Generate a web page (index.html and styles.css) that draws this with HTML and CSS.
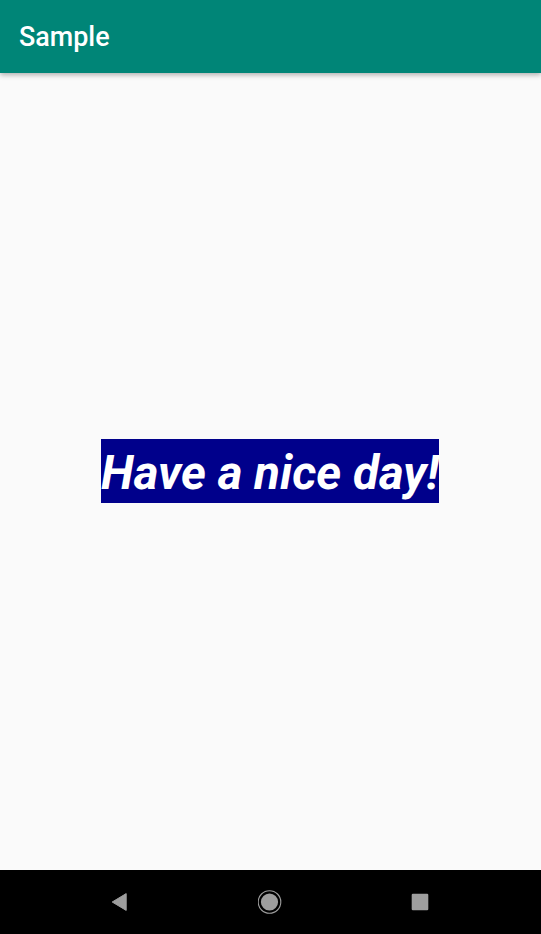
FILE: index.html
```html
<!DOCTYPE html>
<html lang="en">

<head>
  <meta charset="UTF-8">
  <meta name="viewport" content="width=device-width, initial-scale=1.0">
  <title>Sample</title>
  <link rel="stylesheet" href="styles.css">
</head>

<body>
  <header class="app-bar">Sample</header>
  <main class="content">
    <p class="greeting">Have a nice day!</p>
  </main>
  <nav class="nav-bar">
    <svg class="nav-icon" viewBox="0 0 24 24">
      <path d="M4.2 12 L18.2 3.6 V20.4 Z" fill="#9e9e9e" stroke="#9e9e9e" stroke-width="1" stroke-linejoin="round" />
    </svg>
    <svg class="nav-icon" viewBox="0 0 24 24">
      <circle cx="11.5" cy="12" r="11.3" fill="none" stroke="#9e9e9e" stroke-width="1.1" />
      <circle cx="11.5" cy="12" r="8.6" fill="#9e9e9e" />
    </svg>
    <svg class="nav-icon" viewBox="0 0 24 24">
      <rect x="3.7" y="3.7" width="16.6" height="16.6" rx="1.2" fill="#9e9e9e" />
    </svg>
  </nav>
</body>

</html>
```

FILE: styles.css
```css
body {
  margin: 0;
  height: 934px;
  display: flex;
  flex-direction: column;
  background: #fafafa;
  font-family: Roboto, "Liberation Sans", sans-serif;
  overflow: hidden;
}

.app-bar {
  height: 73px;
  flex: none;
  box-sizing: border-box;
  display: flex;
  align-items: center;
  padding-left: 19px;
  background: #008577;
  color: #fff;
  font-size: 26.9px;
  font-weight: 500;
  box-shadow: 0 2px 5px rgba(0, 0, 0, 0.3);
  position: relative;
}

.content {
  flex: 1;
  display: flex;
  align-items: center;
  justify-content: center;
  padding: 0 1px 1px 0;
}

.greeting {
  margin: 0;
  width: 338px;
  height: 64px;
  line-height: 68px;
  text-align: center;
  white-space: nowrap;
  background: #00008b;
  color: #fff;
  font-size: 47.6px;
  font-weight: 700;
  font-style: italic;
}

.nav-bar {
  height: 64px;
  flex: none;
  display: flex;
  align-items: center;
  justify-content: center;
  gap: 126px;
  padding-right: 1px;
  background: #000;
}

.nav-icon {
  width: 24px;
  height: 24px;
}
```
